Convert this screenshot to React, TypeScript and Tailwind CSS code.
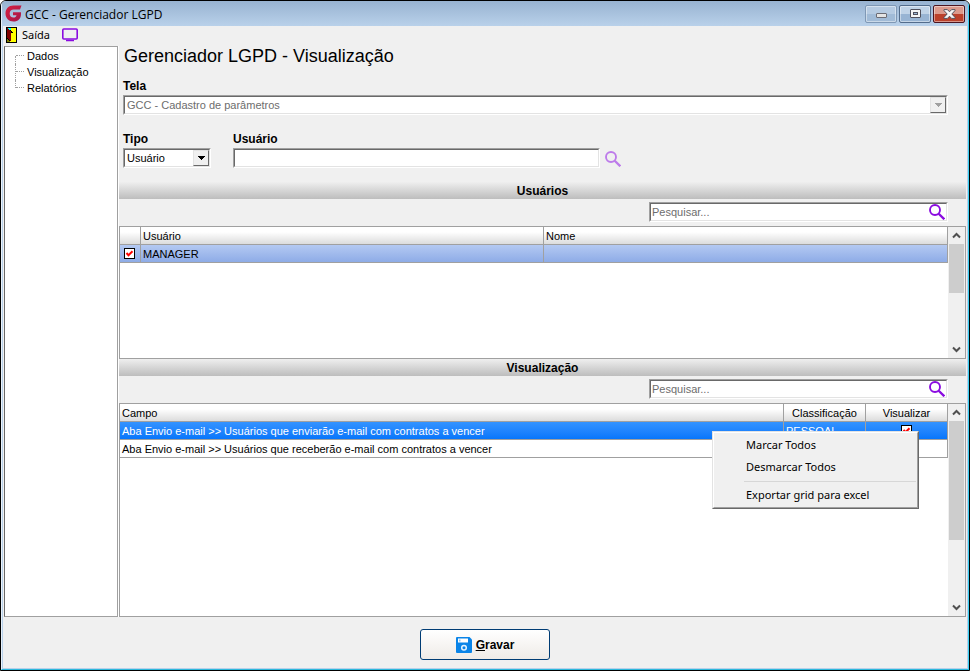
import React, { useState } from "react";
import clsx from "clsx";

const sunken =
  "border border-t-[#a0a0a0] border-l-[#a0a0a0] border-r-white border-b-white";
const sunkenInner =
  "border border-t-[#696969] border-l-[#696969] border-r-[#e3e3e3] border-b-[#e3e3e3]";
const headerCell =
  "h-[18px] p-0 px-[2px] border-b border-[#a0a0a0] bg-linear-to-b from-white from-30% to-[#dcdcdc] font-normal leading-4";

function Logo() {
  return (
    <svg width="17" height="17" viewBox="0 0 17 17" aria-hidden="true">
      <defs>
        <linearGradient id="logo" x1="0" y1="0" x2="1" y2="1">
          <stop offset="0" stopColor="#d8203f" />
          <stop offset="1" stopColor="#a3174a" />
        </linearGradient>
      </defs>
      <path
        d="M16.500 .5H8.500C3.500.5.500 4 .500 8.500c0 4.700 3.300 8 8 8 4.600 0 7.500-2.600 7.500-7.500V7.200H8v3h3.500c-.3 1.500-1.400 2.300-3 2.300-2.400 0-3.800-1.600-3.800-4 0-2.500 1.500-4 4-4H15z"
        fill="url(#logo)"
      />
    </svg>
  );
}

function DoorIcon() {
  return (
    <svg width="11" height="16" viewBox="0 0 11 16" shapeRendering="crispEdges" aria-hidden="true">
      <rect width="11" height="16" fill="#000" />
      <path d="M5 1h5v14H4v-3h1z" fill="#ff0" />
      <path d="M1 1h1v1h1v1h1v1h1v10H4v-1H3v-1H2v-1H1z" fill="#800000" />
      <path d="M2 1h3v2H3V2H2z" fill="#0ff" />
      <path d="M5 4h1v2H5zM6 5h1v1H6z" fill="#000" />
      <path d="M1 12h1v1h1v1h1v1H1z" fill="#808000" />
    </svg>
  );
}

function MonitorIcon() {
  return (
    <svg width="16" height="14" viewBox="0 0 16 14" fill="none" stroke="#8a0be0" aria-hidden="true">
      <rect x="0.800" y="1" width="14.400" height="10" rx="1" strokeWidth="1.600" />
      <path d="M4 12.500h8" strokeWidth="1.600" />
    </svg>
  );
}

function SearchIcon({ color }: { color: string }) {
  return (
    <svg width="16" height="16" viewBox="0 0 16 16" fill="none" stroke={color} aria-hidden="true">
      <circle cx="6" cy="6" r="5" strokeWidth="1.900" />
      <path d="M9.700 9.700l5.600 5.600" strokeWidth="2.300" />
    </svg>
  );
}

function SaveIcon() {
  return (
    <svg width="16" height="16" viewBox="0 0 16 16" aria-hidden="true">
      <path d="M1 0h12.500L16 2.500V15a1 1 0 0 1-1 1H1a1 1 0 0 1-1-1V1a1 1 0 0 1 1-1z" fill="#0a84e8" />
      <path d="M2 1.500h10v4H2z" fill="#fff" />
      <path d="M3 2.500h1.500v2H3z" fill="#8cc6f5" />
      <circle cx="8" cy="10.800" r="2.300" fill="none" stroke="#e4f2fd" strokeWidth="1.500" />
    </svg>
  );
}

function CaptionButton({
  label,
  className,
  children,
}: {
  label: string;
  className: string;
  children: React.ReactNode;
}) {
  return (
    <button
      aria-label={label}
      className={clsx(
        "flex h-[18px] w-8 items-center justify-center rounded-[2px] border inset-shadow-[0_0_0_1px_#ffffff70]",
        className
      )}
    >
      {children}
    </button>
  );
}

function TitleBar() {
  return (
    <header className="flex h-[25px] shrink-0 items-center bg-linear-to-b from-[#98b3d1] to-[#b9d1ea] px-[3px] font-['Open_Sans',sans-serif]">
      <Logo />
      <h1 className="ml-[3px] mt-[2px] flex-1 text-xs">GCC - Gerenciador LGPD</h1>
      <div className="flex gap-[2px]">
        <CaptionButton
          label="Minimizar"
          className="border-[#7f98b5] bg-linear-to-b from-[#b6cbe2] from-50% to-[#a1bbd7] to-50%"
        >
          <svg width="11" height="5" viewBox="0 0 11 5" className="mt-1">
            <rect x="0.500" y="0.500" width="10" height="4" rx="0.500" fill="#e4e4e4" stroke="#6c6c74" />
          </svg>
        </CaptionButton>
        <CaptionButton
          label="Maximizar"
          className="border-[#536c8b] bg-linear-to-b from-[#c0d3e7] from-50% to-[#98b4d3] to-50%"
        >
          <svg width="11" height="9" viewBox="0 0 11 9">
            <rect x="0.500" y="0.500" width="10" height="8" rx="0.500" fill="#f4f4f4" stroke="#50505c" />
            <rect x="3.500" y="3.500" width="4" height="2" fill="#9db8d5" stroke="#50505c" />
          </svg>
        </CaptionButton>
        <CaptionButton
          label="Fechar"
          className="border-[#4c1520] bg-linear-to-b from-[#dc9a8c] from-50% to-[#bb412b] to-50%"
        >
          <svg width="13" height="10" viewBox="0 0 13 10">
            <path
              d="M1 .6h3.400l2.100 2.200L8.600.6H12v1L8.800 5l3.200 3.400v1H8.600L6.500 7.200 4.400 9.400H1v-1L4.200 5 1 1.600z"
              fill="#f7f7f7"
              stroke="#54545e"
            />
          </svg>
        </CaptionButton>
      </div>
    </header>
  );
}

function Toolbar() {
  return (
    <div className="flex h-5 shrink-0 items-start pl-[2px] pt-px font-['Noto_Sans',sans-serif] text-[11px]">
      <button className="flex items-center gap-[5px]">
        <DoorIcon />
        Saída
      </button>
      <button aria-label="Tela" className="ml-3 mt-px">
        <MonitorIcon />
      </button>
    </div>
  );
}

function Sidebar() {
  const items = ["Dados", "Visualização", "Relatórios"];
  return (
    <nav className="w-[115px] shrink-0 border-r border-white">
      <ul className="h-full border border-[#a0a0a0] border-l-[#696969] bg-white pl-[10px] pt-[1px]">
        {items.map((item, i) => (
          <li key={item} className="flex h-4">
            <span
              className={clsx(
                "w-px border-l border-dotted border-[#a0a0a0]",
                i === 0 && "mt-2",
                i === items.length - 1 && "h-2"
              )}
            />
            <span className="h-2 w-2 border-b border-dotted border-[#a0a0a0]" />
            <a href="#" className="pl-[3px] leading-4">
              {item}
            </a>
          </li>
        ))}
      </ul>
    </nav>
  );
}

function Select({
  id,
  value,
  disabled,
}: {
  id: string;
  value: string;
  disabled?: boolean;
}) {
  return (
    <div className={clsx("relative", sunken)}>
      <select
        id={id}
        disabled={disabled}
        className={clsx(
          "block h-[18px] w-full appearance-none bg-white pl-[2px] pr-5 leading-4 opacity-100",
          sunkenInner,
          disabled && "text-[#6d6d6d]"
        )}
      >
        <option>{value}</option>
      </select>
      <span className="pointer-events-none absolute inset-y-px right-px flex w-4 items-center justify-center border border-t-[#e3e3e3] border-l-[#e3e3e3] border-r-[#696969] border-b-[#696969] bg-[#f0f0f0]">
        <svg width="7" height="4" viewBox="0 0 7 4" shapeRendering="crispEdges">
          <path d="M0 0h7L3.500 4z" fill={disabled ? "#a0a0a0" : "#000"} />
        </svg>
      </span>
    </div>
  );
}

function FilterForm() {
  return (
    <section className="h-[136px] shrink-0 px-1">
      <h2 className="pl-px text-[18px] leading-5">Gerenciador LGPD - Visualização</h2>
      <div className="mr-[14px] mt-3">
        <label htmlFor="tela" className="block text-xs font-bold leading-4">
          Tela
        </label>
        <div className="mt-[1px]">
          <Select id="tela" value="GCC - Cadastro de parâmetros" disabled />
        </div>
      </div>
      <div className="mt-4 flex items-end">
        <div className="w-[88px]">
          <label htmlFor="tipo" className="mb-px block text-xs font-bold leading-4">
            Tipo
          </label>
          <Select id="tipo" value="Usuário" />
        </div>
        <div className="ml-[22px] w-[367px]">
          <label htmlFor="usuario" className="mb-px block text-xs font-bold leading-4">
            Usuário
          </label>
          <div className={sunken}>
            <input
              id="usuario"
              type="text"
              className={clsx("block h-[18px] w-full bg-white px-[2px]", sunkenInner)}
            />
          </div>
        </div>
        <button aria-label="Buscar usuário" className="mb-px ml-[5px]">
          <SearchIcon color="#bd7bea" />
        </button>
      </div>
    </section>
  );
}

function SectionHeader({ title }: { title: string }) {
  return (
    <>
      <h3 className="h-[17px] shrink-0 bg-linear-to-b from-[#efefef] to-[#bdbdbd] text-center text-xs font-bold leading-[18px]">
        {title}
      </h3>
      <div className="flex h-[27px] shrink-0 items-start justify-end pr-[18px] pt-[3px]">
        <div className={clsx("w-[299px]", sunken)}>
          <div className={clsx("flex h-[18px] items-center bg-white", sunkenInner)}>
            <input
              type="search"
              aria-label={`Pesquisar em ${title}`}
              placeholder="Pesquisar..."
              className="min-w-0 flex-1 pl-[1px] outline-none placeholder:text-[#6d6d6d]"
            />
            <button aria-label="Pesquisar" className="mr-px">
              <SearchIcon color="#8a0be0" />
            </button>
          </div>
        </div>
      </div>
    </>
  );
}

function Chevron({ down }: { down?: boolean }) {
  return (
    <svg width="9" height="7" viewBox="0 0 9 7" fill="none" stroke="#505050" strokeWidth="2">
      <path d={down ? "M1 1.500l3.500 3.500L8 1.500" : "M1 5.500L4.500 2 8 5.500"} />
    </svg>
  );
}

function ScrollBar({ thumb }: { thumb: string }) {
  return (
    <div className="flex w-[17px] shrink-0 flex-col bg-[#f0f0f0] px-px">
      <button aria-label="Rolar para cima" className="flex h-[17px] items-center justify-center">
        <Chevron />
      </button>
      <div className="flex-1">
        <div className={clsx("bg-[#cdcdcd]", thumb)} />
      </div>
      <button aria-label="Rolar para baixo" className="flex h-[17px] items-center justify-center">
        <Chevron down />
      </button>
    </div>
  );
}

function CheckBox({ label }: { label: string }) {
  const [checked, setChecked] = useState(true);
  return (
    <label className="relative block size-[11px]">
      <input
        type="checkbox"
        aria-label={label}
        checked={checked}
        onChange={(e) => setChecked(e.target.checked)}
        className="block size-[11px] appearance-none border border-black bg-white"
      />
      {checked && (
        <svg viewBox="0 0 11 11" className="pointer-events-none absolute inset-0">
          <path d="M2.500 5l2 2.200L8.500 3.200" fill="none" stroke="#f00" strokeWidth="2" />
        </svg>
      )}
    </label>
  );
}

function UsersGrid() {
  return (
    <div className="flex h-[133px] shrink-0 border border-[#a0a0a0] bg-white">
      <div className="flex-1">
        <table className="w-full table-fixed border-separate border-spacing-0 text-left">
          <thead>
            <tr>
              <th className={clsx("w-[21px] border-r", headerCell)} />
              <th className={clsx("w-[403px] border-r", headerCell)}>Usuário</th>
              <th className={clsx("border-r", headerCell)}>Nome</th>
            </tr>
          </thead>
          <tbody>
            <tr className="bg-linear-to-b from-[#b4c9f2] to-[#8caae6]">
              <td className="h-[18px] border-b border-r border-[#a0a0a0] p-0 pl-1">
                <CheckBox label="Selecionar MANAGER" />
              </td>
              <td className="border-b border-r border-[#a0a0a0] p-0 px-[2px] leading-4">MANAGER</td>
              <td className="border-b border-r border-[#a0a0a0] p-0" />
            </tr>
          </tbody>
        </table>
      </div>
      <ScrollBar thumb="h-[49px]" />
    </div>
  );
}

function ContextMenu() {
  return (
    <div
      role="menu"
      className="absolute right-[46px] top-[27px] w-[207px] border border-[#e3e3e3] border-b-[#696969] border-r-[#696969] bg-[#f0f0f0] font-['Noto_Sans',sans-serif] text-[11px]"
    >
      <div className="flex flex-col border border-b-[#a0a0a0] border-l-white border-r-[#a0a0a0] border-t-white py-px">
        <button role="menuitem" className="h-[22px] pl-8 text-left">
          Marcar Todos
        </button>
        <button role="menuitem" className="h-[22px] pl-8 text-left">
          Desmarcar Todos
        </button>
        <hr className="mb-[2px] ml-[30px] mr-px mt-[3px] border-[#d7d7d7]" />
        <button role="menuitem" className="h-[22px] pl-8 text-left">
          Exportar grid para excel
        </button>
      </div>
    </div>
  );
}

function FieldsGrid() {
  return (
    <div className="relative flex flex-1 border border-[#a0a0a0] bg-white">
      <div className="flex-1">
        <table className="w-full table-fixed border-separate border-spacing-0 text-left">
          <thead>
            <tr>
              <th className={clsx("border-r", headerCell)}>Campo</th>
              <th className={clsx("w-[82px] border-r text-center", headerCell)}>Classificação</th>
              <th className={clsx("w-[82px] border-r text-center", headerCell)}>Visualizar</th>
            </tr>
          </thead>
          <tbody>
            <tr className="bg-linear-to-b from-[#3393ff] to-[#0274fb] text-white">
              <td className="h-[18px] border-b border-r border-[#a0a0a0] p-0 px-[2px] leading-4">
                Aba Envio e-mail &gt;&gt; Usuários que enviarão e-mail com contratos a vencer
              </td>
              <td className="border-b border-r border-[#a0a0a0] p-0 px-[2px] leading-4">PESSOAL</td>
              <td className="border-b border-r border-[#a0a0a0] p-0">
                <div className="flex justify-center">
                  <CheckBox label="Visualizar campo" />
                </div>
              </td>
            </tr>
            <tr>
              <td className="h-[18px] border-b border-r border-[#a0a0a0] p-0 px-[2px] leading-4">
                Aba Envio e-mail &gt;&gt; Usuários que receberão e-mail com contratos a vencer
              </td>
              <td className="border-b border-r border-[#a0a0a0] p-0" />
              <td className="border-b border-r border-[#a0a0a0] p-0" />
            </tr>
          </tbody>
        </table>
      </div>
      <ScrollBar thumb="h-[119px]" />
      <ContextMenu />
    </div>
  );
}

export default function App() {
  return (
    <div className="bg-white">
      <div className="flex h-screen min-h-[560px] flex-col overflow-hidden rounded-t-md border border-black bg-[#f0f0f0] font-['Liberation_Sans',Arial,sans-serif] text-[11px] text-black">
        <div className="flex flex-1 flex-col border-x border-b border-b-[#2bb8dc] border-l-[#e8f2fb] border-r-[#3bd0f2]">
          <TitleBar />
          <div className="flex flex-1 flex-col border-x border-b border-[#b9d1ea] px-px">
            <Toolbar />
            <div className="flex flex-1">
              <Sidebar />
              <main className="flex min-w-0 flex-1 flex-col">
                <FilterForm />
                <SectionHeader title="Usuários" />
                <UsersGrid />
                <SectionHeader title="Visualização" />
                <FieldsGrid />
              </main>
            </div>
            <footer className="flex h-[51px] shrink-0 justify-center pt-3">
              <button className="flex h-[31px] w-[130px] items-center justify-center gap-1 rounded-[3px] border border-[#003c74] bg-linear-to-b from-white to-[#efebe7] text-xs font-bold">
                <SaveIcon />
                <span>
                  <u>G</u>ravar
                </span>
              </button>
            </footer>
          </div>
        </div>
      </div>
    </div>
  );
}
